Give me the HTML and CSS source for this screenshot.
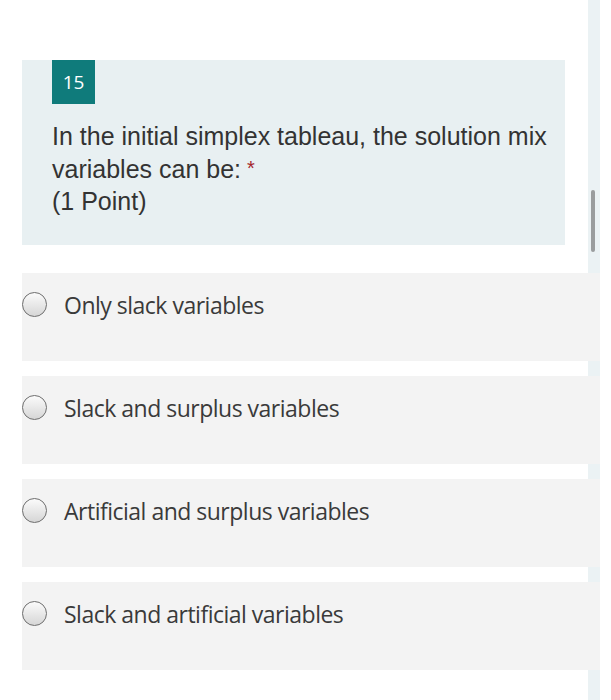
FILE: index.html
```html
<!DOCTYPE html>
<html lang="en">
<head>
<meta charset="utf-8">
<title>Question 15</title>
<link rel="stylesheet" href="styles.css">
</head>
<body>
<div class="track"><div class="thumb"></div></div>
<main class="form">
  <section class="question">
    <div class="badge">15</div>
    <div class="title">
      <div class="line">In the initial simplex tableau, the solution mix</div>
      <div class="line"><span>variables can be:</span><span class="req">*</span></div>
      <div class="line">(1 Point)</div>
    </div>
  </section>
  <ul class="options">
    <li class="option"><span class="radio"></span><span class="label">Only slack variables</span></li>
    <li class="option"><span class="radio"></span><span class="label">Slack and surplus variables</span></li>
    <li class="option"><span class="radio"></span><span class="label">Artificial and surplus variables</span></li>
    <li class="option"><span class="radio"></span><span class="label">Slack and artificial variables</span></li>
  </ul>
</main>
</body>
</html>
```
FILE: styles.css
```css
html, body {
  margin: 0;
  padding: 0;
  background: #ffffff;
}
body {
  width: 611px;
  height: 700px;
  overflow: hidden;
  position: relative;
  font-family: "Liberation Sans", Arial, sans-serif;
}
.track {
  position: absolute;
  left: 588px;
  top: 0;
  width: 12px;
  height: 700px;
  background: #ebf2f4;
}
.thumb {
  position: absolute;
  left: 3px;
  top: 190px;
  width: 4px;
  height: 62px;
  border-radius: 2px;
  background: #9a9d9e;
}
.form {
  position: relative;
  padding: 60px 0 0 22px;
}
.question {
  width: 543px;
  height: 185px;
  box-sizing: border-box;
  background: #e8f0f2;
  padding: 0 0 0 30px;
}
.badge {
  width: 43px;
  height: 44px;
  background: #0f7b7b;
  color: #ffffff;
  font-family: "Open Sans", sans-serif;
  font-size: 19px;
  display: flex;
  align-items: center;
  justify-content: center;
}
.title {
  margin: 16px 0 0 0;
  font-size: 25px;
  line-height: 32.5px;
  color: #333333;
}
.line {
  display: flex;
  align-items: flex-start;
  gap: 6px;
  white-space: nowrap;
}
.req {
  color: #a4262c;
  font-size: 20px;
  line-height: 24px;
  margin-top: 3px;
}
.options {
  list-style: none;
  margin: 28px 0 0 0;
  padding: 0;
  display: flex;
  flex-direction: column;
  gap: 15px;
}
.option {
  width: 578px;
  height: 88px;
  box-sizing: border-box;
  background: #f3f3f3;
  display: flex;
  align-items: flex-start;
  padding-top: 18px;
  gap: 17px;
}
.radio {
  width: 23px;
  height: 23px;
  border: 1.5px solid #6e6e6e;
  border-radius: 50%;
  background: linear-gradient(#fbfbfb, #d6d6d6);
  flex: none;
  margin-top: 1px;
}
.label {
  font-family: "Open Sans", sans-serif;
  font-size: 23px;
  letter-spacing: -0.5px;
  line-height: 28px;
  color: #3a3a3a;
}
```
